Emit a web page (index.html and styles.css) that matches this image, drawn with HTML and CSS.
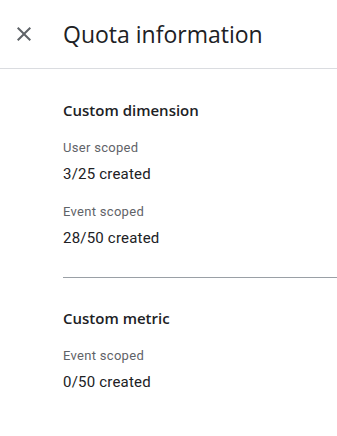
FILE: index.html
```html
<!DOCTYPE html>
<html lang="en">
<head>
    <meta charset="UTF-8">
    <meta name="viewport" content="width=device-width, initial-scale=1.0">
    <title>Quota information</title>
    <link rel="stylesheet" href="styles.css">
</head>
<body>
    <div class="panel">
        <div class="panel-header">
            <button class="close-btn" aria-label="Close">
                <svg width="24" height="24" viewBox="0 0 24 24">
                    <path d="M19 6.41L17.59 5 12 10.59 6.41 5 5 6.41 10.59 12 5 17.59 6.41 19 12 13.41 17.59 19 19 17.59 13.41 12z" fill="#5f6368"/>
                </svg>
            </button>
            <h1 class="panel-title">Quota information</h1>
        </div>
        <div class="panel-body">
            <div class="quota-section">
                <h2 class="section-title">Custom dimension</h2>
                <div class="quota-item">
                    <div class="quota-label">User scoped</div>
                    <div class="quota-value">3/25 created</div>
                </div>
                <div class="quota-item">
                    <div class="quota-label">Event scoped</div>
                    <div class="quota-value">28/50 created</div>
                </div>
            </div>
            <div class="quota-section">
                <h2 class="section-title">Custom metric</h2>
                <div class="quota-item">
                    <div class="quota-label">Event scoped</div>
                    <div class="quota-value">0/50 created</div>
                </div>
            </div>
        </div>
    </div>
</body>
</html>
```

FILE: styles.css
```css
body {
    font-family: Roboto, "Liberation Sans", sans-serif;
    background-color: #fff;
    color: #202124;
    margin: 0;
    padding: 0;
}
.panel {
    width: 337px;
}
.panel-header {
    display: flex;
    align-items: center;
    height: 68px;
    border-bottom: 1px solid #dadce0;
}
.close-btn {
    display: flex;
    width: 24px;
    height: 24px;
    margin-left: 12px;
    padding: 0;
    border: none;
    background: none;
    cursor: pointer;
}
.panel-title {
    margin: 0 0 0 27px;
    font-family: "Open Sans", Roboto, sans-serif;
    font-size: 23px;
    line-height: 28px;
    font-weight: 400;
}
.panel-body {
    padding-left: 63px;
}
.quota-section {
    padding: 29px 0 29px;
}
.quota-section + .quota-section {
    border-top: 1px solid #9aa0a6;
    padding-top: 28px;
}
.section-title {
    margin: 0 0 18px;
    font-family: "Open Sans", Roboto, sans-serif;
    font-size: 15px;
    line-height: 24px;
    font-weight: 600;
}
.quota-item + .quota-item {
    margin-top: 20px;
}
.quota-label {
    font-size: 13px;
    line-height: 16px;
    letter-spacing: 0.3px;
    color: #5f6368;
    margin-bottom: 8px;
}
.quota-value {
    font-size: 15px;
    line-height: 20px;
    letter-spacing: 0.2px;
}
```
